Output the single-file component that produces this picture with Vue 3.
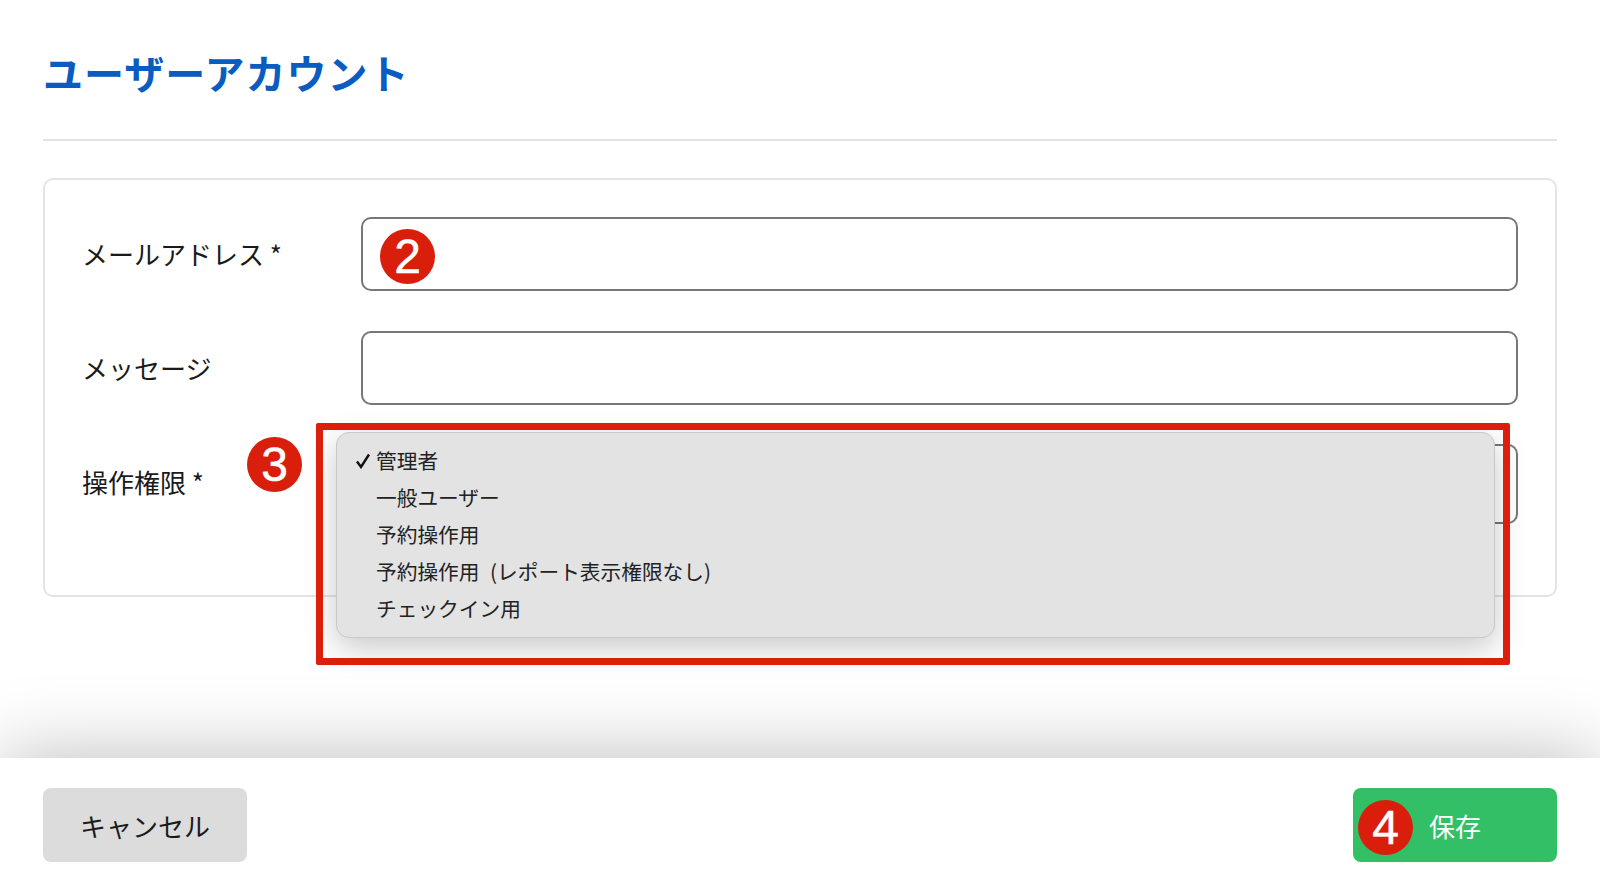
<!-- ユーザーアカウント編集フォーム(説明用の番号付き) -->

<template>
  <div class="page">
    <main class="content">
      <header class="head">
        <h1>ユーザーアカウント</h1>
      </header>

      <section class="card">
        <div class="row">
          <label>メールアドレス *</label>
          <input type="text" class="field" />
        </div>
        <div class="row">
          <label>メッセージ</label>
          <input type="text" class="field" />
        </div>
        <div class="row">
          <label class="up">操作権限 *</label>
          <div class="select">
            <span class="arrow"></span>
            <ul class="menu">
              <li v-for="opt in options" :key="opt.text">
                <svg v-if="opt.checked" class="check" width="16" height="16" viewBox="0 0 16 16">
                  <path d="M2 8.5 L6 14 L14 1.5" fill="none" stroke="#111" stroke-width="2.4" />
                </svg>
                {{ opt.text }}
              </li>
            </ul>
            <div class="frame"></div>
          </div>
        </div>
      </section>
    </main>

    <footer class="foot">
      <button class="btn cancel">キャンセル</button>
      <button class="btn save">保存</button>
    </footer>

    <span class="badge b2">2</span>
    <span class="badge b3">3</span>
    <span class="badge b4">4</span>
  </div>
</template>

<script setup>
const options = [
  { text: '管理者', checked: true },
  { text: '一般ユーザー' },
  { text: '予約操作用' },
  { text: '予約操作用 (レポート表示権限なし)' },
  { text: 'チェックイン用' }
]
</script>

<style>
html,
body {
  margin: 0;
  background: #fff;
}
</style>

<style scoped>
.page {
  position: relative;
  height: 882px;
  display: flex;
  flex-direction: column;
  overflow: hidden;
  background: #fff;
  color: #1a1a1a;
  font-family: "Noto Sans CJK JP", "Liberation Sans", sans-serif;
}

.content {
  flex: 1;
  padding: 0 43px;
}

.head {
  height: 141px;
  border-bottom: 2px solid #e2e2e2;
  display: flex;
  align-items: center;
  padding-top: 4px;
  box-sizing: border-box;
}

h1 {
  margin: 0;
  font-size: 40px;
  letter-spacing: 1px;
  font-weight: 700;
  color: #0b5cc0;
}

.card {
  margin-top: 37px;
  height: 419px;
  box-sizing: border-box;
  border: 2px solid #e4e4e4;
  border-radius: 10px;
  padding: 37px 37px 36px 38px;
  display: flex;
  flex-direction: column;
  gap: 39.5px;
}

.row {
  display: grid;
  grid-template-columns: 278px 1fr;
  align-items: center;
}

label {
  font-size: 26px;
  line-height: 1;
  margin-left: -1px;
}

.up {
  margin-bottom: 4px;
}

.field {
  height: 74px;
  box-sizing: border-box;
  border: 2px solid #777;
  border-radius: 10px;
  background: #fff;
  outline: none;
}

.select {
  position: relative;
  height: 80px;
  box-sizing: border-box;
  border: 2px solid #777;
  border-radius: 10px;
}

.arrow {
  position: absolute;
  right: 22px;
  top: 33px;
  width: 2px;
  height: 2px;
  background: #222;
}

.menu {
  position: absolute;
  top: -14px;
  left: -27px;
  right: 21px;
  height: 206px;
  box-sizing: border-box;
  margin: 0;
  padding: 8.5px 0 0 39px;
  list-style: none;
  background: #e3e3e3;
  border: 1px solid #c9c9c9;
  border-radius: 13px;
  box-shadow: 0 10px 32px rgba(0, 0, 0, 0.22);
  z-index: 1;
}

.menu li {
  position: relative;
  height: 37px;
  line-height: 37px;
  font-size: 20.7px;
  word-spacing: 6px;
  color: #222;
}

.check {
  position: absolute;
  left: -21px;
  top: 11px;
}

.frame {
  position: absolute;
  top: -23px;
  left: -47px;
  right: 6px;
  bottom: -143px;
  border: 7px solid #dc1f0a;
  border-radius: 2px;
  z-index: 2;
}

.foot {
  position: relative;
  height: 124px;
  box-sizing: border-box;
  padding: 30px 43px 20px;
  display: flex;
  justify-content: space-between;
  background: #fff;
  box-shadow: 0 0 80px rgba(0, 0, 0, 0.27);
  z-index: 0;
}

.btn {
  width: 204px;
  height: 74px;
  border: none;
  border-radius: 8px;
  font-family: inherit;
  font-size: 26px;
}

.cancel {
  background: #dcdcdc;
  color: #1a1a1a;
}

.save {
  background: #33bf66;
  color: #fff;
}

.badge {
  position: absolute;
  width: 55px;
  height: 55px;
  border-radius: 50%;
  background: #d91e0b;
  color: #fff;
  display: flex;
  align-items: center;
  justify-content: center;
  font-family: "Liberation Sans", Arial, sans-serif;
  font-size: 48px;
  line-height: 1;
  -webkit-text-stroke: 0.5px #fff;
  z-index: 3;
}

.b2 {
  left: 380px;
  top: 229px;
}

.b3 {
  left: 247px;
  top: 437px;
}

.b4 {
  left: 1358px;
  top: 800px;
}
</style>
